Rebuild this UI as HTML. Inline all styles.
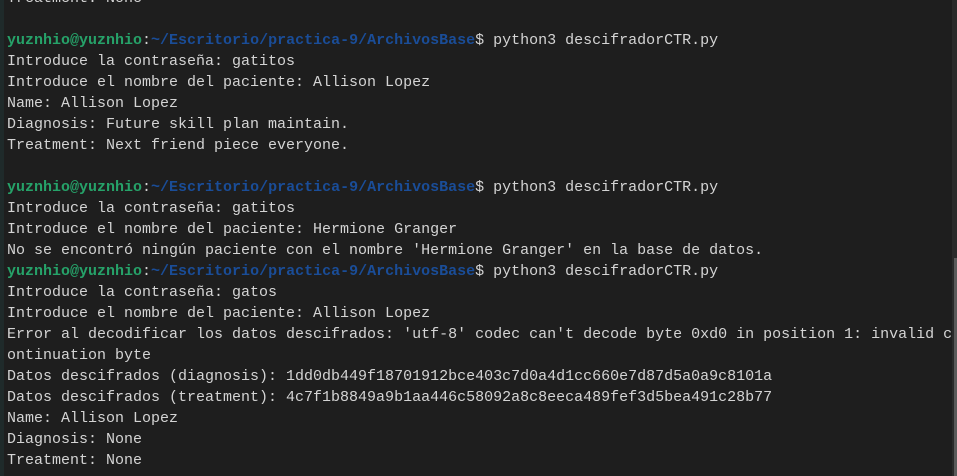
<!DOCTYPE html>
<html><head><meta charset="utf-8"><style>
html,body{margin:0;padding:0;width:957px;height:476px;overflow:hidden;background:#1e1e1e}
.left{position:absolute;left:0;top:0;width:4px;height:476px;background:#1f2a2a}
.sb{position:absolute;left:952px;top:0;width:5px;height:476px;background:#2a2a2a}
.th{position:absolute;left:954px;top:258px;width:3px;height:218px;background:#5a5a5a}
pre{position:absolute;left:7px;top:-12.5px;margin:0;font-family:"Liberation Mono",monospace;font-size:15px;line-height:21px;color:#d4d4d4}
.g{color:#26a269;font-weight:bold}.b{color:#1a4d98;font-weight:bold}
</style></head><body><div class="left"></div><div class="sb"></div><div class="th"></div>
<pre>Treatment: None

<span class="g">yuznhio@yuznhio</span>:<span class="b">~/Escritorio/practica-9/ArchivosBase</span>$ python3 descifradorCTR.py
Introduce la contraseña: gatitos
Introduce el nombre del paciente: Allison Lopez
Name: Allison Lopez
Diagnosis: Future skill plan maintain.
Treatment: Next friend piece everyone.

<span class="g">yuznhio@yuznhio</span>:<span class="b">~/Escritorio/practica-9/ArchivosBase</span>$ python3 descifradorCTR.py
Introduce la contraseña: gatitos
Introduce el nombre del paciente: Hermione Granger
No se encontró ningún paciente con el nombre 'Hermione Granger' en la base de datos.
<span class="g">yuznhio@yuznhio</span>:<span class="b">~/Escritorio/practica-9/ArchivosBase</span>$ python3 descifradorCTR.py
Introduce la contraseña: gatos
Introduce el nombre del paciente: Allison Lopez
Error al decodificar los datos descifrados: 'utf-8' codec can't decode byte 0xd0 in position 1: invalid c
ontinuation byte
Datos descifrados (diagnosis): 1dd0db449f18701912bce403c7d0a4d1cc660e7d87d5a0a9c8101a
Datos descifrados (treatment): 4c7f1b8849a9b1aa446c58092a8c8eeca489fef3d5bea491c28b77
Name: Allison Lopez
Diagnosis: None
Treatment: None</pre></body></html>
